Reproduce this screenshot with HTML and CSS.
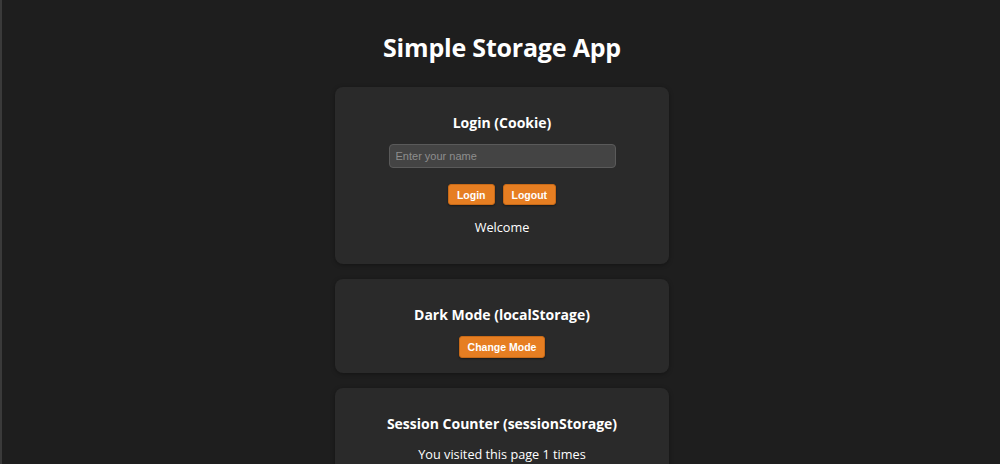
FILE: index.html
```html
<!DOCTYPE html>
<html lang="en">
<head>
<meta charset="utf-8">
<title>Simple Storage App</title>
<link rel="stylesheet" href="styles.css">
</head>
<body>
<main class="app">
  <h1 class="app-title">Simple Storage App</h1>

  <section class="card">
    <h2 class="card-title">Login (Cookie)</h2>
    <input class="name-input" type="text" placeholder="Enter your name">
    <div class="btn-row">
      <button class="btn">Login</button>
      <button class="btn">Logout</button>
    </div>
    <p class="card-text">Welcome</p>
  </section>

  <section class="card">
    <h2 class="card-title">Dark Mode (localStorage)</h2>
    <div class="btn-row btn-row-tight">
      <button class="btn btn-wide">Change Mode</button>
    </div>
  </section>

  <section class="card">
    <h2 class="card-title">Session Counter (sessionStorage)</h2>
    <p class="card-text card-text-tight">You visited this page 1 times</p>
  </section>
</main>
</body>
</html>
```

FILE: styles.css
```css
* {
  box-sizing: border-box;
}

html, body {
  height: 100%;
}

body {
  margin: 0;
  background: #1e1e1e;
  border-left: 2px solid #3a3a3a;
  color: #ffffff;
  font-family: "Open Sans", "Noto Sans", sans-serif;
  overflow: hidden;
}

.app {
  display: flex;
  flex-direction: column;
  align-items: center;
  padding-top: 30px;
  padding-left: 2px;
}

.app-title {
  margin: 0 0 23px;
  font-size: 25px;
  line-height: 34px;
  font-weight: 700;
  letter-spacing: -0.2px;
}

.card {
  width: 334px;
  margin-bottom: 15px;
  padding: 15px 20px;
  background: #2a2a2a;
  border-radius: 8px;
  box-shadow: 0 1px 4px rgba(0, 0, 0, 0.35);
  display: flex;
  flex-direction: column;
  align-items: center;
}

.card-title {
  margin: 10px 0 10px;
  font-size: 14px;
  line-height: 22px;
  font-weight: 700;
}

.name-input {
  width: 227px;
  height: 24px;
  padding: 0 6px;
  background: #444444;
  border: 1px solid #5a5a5a;
  border-radius: 4px;
  color: #ffffff;
  font-family: "Liberation Sans", Arial, sans-serif;
  font-size: 11px;
  outline: none;
}

.name-input::placeholder {
  color: #8e8e8e;
}

.btn-row {
  display: flex;
  gap: 8px;
  margin-top: 16px;
}

.btn-row-tight {
  margin-top: 0;
}

.btn {
  height: 21px;
  padding: 0 8px;
  background: #e67e22;
  border: 1px solid #c86a18;
  border-radius: 3px;
  color: #ffffff;
  font-family: "Liberation Sans", Arial, sans-serif;
  font-size: 10.5px;
  font-weight: 700;
  box-shadow: 0 1px 2px rgba(0, 0, 0, 0.4);
}

.btn-wide {
  height: 22px;
}

.card-text {
  margin: 13px 0;
  font-size: 12.7px;
  line-height: 18px;
}

.card-text-tight {
  margin-top: 0;
}
```
